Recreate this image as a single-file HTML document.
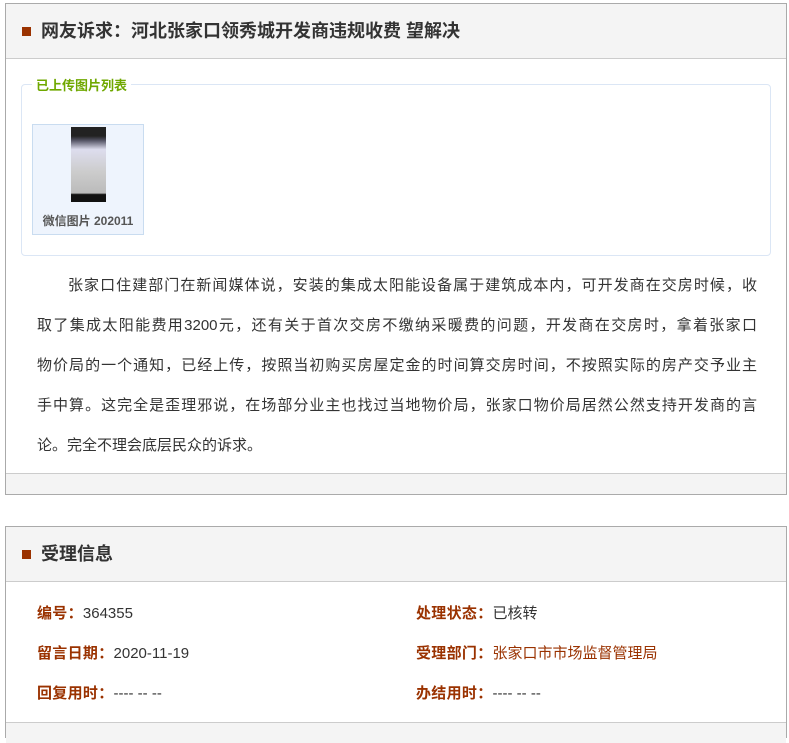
<!DOCTYPE html>
<html><head><meta charset="utf-8"><style>
body{margin:0;background:#fff;font-family:"Liberation Sans","Noto Sans CJK SC",sans-serif;overflow:hidden;}
.panel{position:absolute;left:5px;width:780px;border:1px solid #aaa;background:#fff;}
.hd{height:54px;background:#f4f4f4;border-bottom:1px solid #ccc;position:relative;}
.hd i{position:absolute;left:16px;top:23px;width:9px;height:9px;background:#9a3200;}
.hd b{position:absolute;left:35px;top:15px;font-size:18px;color:#333;line-height:24px;}
.ft{height:20px;background:#f4f4f4;border-top:1px solid #ccc;position:absolute;left:0;right:0;bottom:0;}
fieldset{position:absolute;left:15px;top:71px;width:750px;height:181px;border:1px solid #dbe6f5;border-radius:4px;margin:0;padding:0;box-sizing:border-box;}
legend{color:#6fa800;font-size:13px;font-weight:bold;margin-left:10px;padding:0 4px;}
.img{position:absolute;left:26px;top:120px;width:112px;height:111px;background:#eef4fd;border:1px solid #c9dcf0;box-sizing:border-box;}
.ph{position:absolute;left:38px;top:2px;width:35px;height:75px;background:linear-gradient(#222 0,#222 12%,#556 18%,#dde 30%,#ccc 60%,#bbb 88%,#111 90%);}
.cap{position:absolute;left:0;right:0;top:87px;text-align:center;font-size:12px;font-weight:bold;color:#555;}
.txt{position:absolute;left:31px;top:262px;width:720px;font-size:15px;color:#333;}
.txt div{height:40px;line-height:40px;text-align:justify;text-align-last:justify;}
.info{position:absolute;font-size:15px;color:#333;}
.info span{color:#9a3200;font-weight:bold;letter-spacing:0.3px;}
</style></head><body>
<div class="panel" style="top:3px;height:490px;">
 <div class="hd"><i></i><b>网友诉求：河北张家口领秀城开发商违规收费 望解决</b></div>
 <fieldset><legend>已上传图片列表</legend></fieldset>
 <div class="img"><div class="ph"></div><div class="cap">微信图片 202011</div></div>
 <div class="txt">
  <div style="padding-left:31px">张家口住建部门在新闻媒体说，安装的集成太阳能设备属于建筑成本内，可开发商在交房时候，收</div>
  <div>取了集成太阳能费用3200元，还有关于首次交房不缴纳采暖费的问题，开发商在交房时，拿着张家口</div>
  <div>物价局的一个通知，已经上传，按照当初购买房屋定金的时间算交房时间，不按照实际的房产交予业主</div>
  <div>手中算。这完全是歪理邪说，在场部分业主也找过当地物价局，张家口物价局居然公然支持开发商的言</div>
  <div style="text-align-last:left">论。完全不理会底层民众的诉求。</div>
 </div>
 <div class="ft"></div>
</div>
<div class="panel" style="top:526px;height:210px;">
 <div class="hd"><i></i><b>受理信息</b></div>
 <div class="info" style="left:31px;top:75px"><span>编号：</span>364355</div>
 <div class="info" style="left:410px;top:75px"><span>处理状态：</span>已核转</div>
 <div class="info" style="left:31px;top:115px"><span>留言日期：</span>2020-11-19</div>
 <div class="info" style="left:410px;top:115px"><span>受理部门：</span><font color="#9a3200">张家口市市场监督管理局</font></div>
 <div class="info" style="left:31px;top:155px"><span>回复用时：</span>---- -- --</div>
 <div class="info" style="left:410px;top:155px"><span>办结用时：</span>---- -- --</div>
 <div style="position:absolute;left:0;right:0;top:195px;height:20px;background:#f4f4f4;border-top:1px solid #ccc"></div>
</div>
</body></html>
